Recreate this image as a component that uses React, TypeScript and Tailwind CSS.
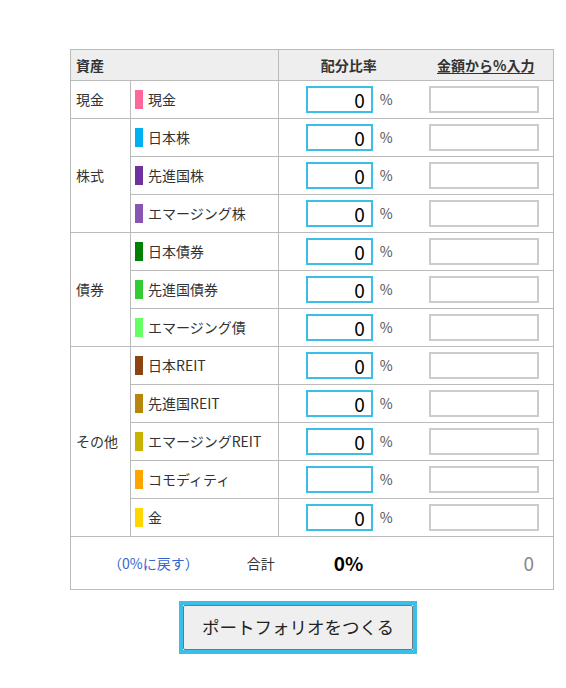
import { useState } from "react";

type Asset = { name: string; color: string; value: string };
type Group = { label: string; items: Asset[] };

const GROUPS: Group[] = [
  { label: "現金", items: [{ name: "現金", color: "#ff6699", value: "0" }] },
  {
    label: "株式",
    items: [
      { name: "日本株", color: "#00b0f0", value: "0" },
      { name: "先進国株", color: "#7030a0", value: "0" },
      { name: "エマージング株", color: "#8855b0", value: "0" },
    ],
  },
  {
    label: "債券",
    items: [
      { name: "日本債券", color: "#008000", value: "0" },
      { name: "先進国債券", color: "#33cc33", value: "0" },
      { name: "エマージング債", color: "#66ff66", value: "0" },
    ],
  },
  {
    label: "その他",
    items: [
      { name: "日本REIT", color: "#8b4513", value: "0" },
      { name: "先進国REIT", color: "#b8860b", value: "0" },
      { name: "エマージングREIT", color: "#c8b400", value: "0" },
      { name: "コモディティ", color: "#ffa500", value: "" },
      { name: "金", color: "#ffd700", value: "0" },
    ],
  },
];

const font = "font-['Noto_Sans_CJK_JP','Noto_Sans',sans-serif]";
const cell = "border border-[#bbbbbb] h-[38px] p-0";

function Row({ item, label, span }: { item: Asset; label?: string; span?: number }) {
  const [ratio, setRatio] = useState(item.value);
  const [amount, setAmount] = useState("");

  return (
    <tr>
      {label && (
        <td rowSpan={span} className={`${cell} pl-[5px] text-[14px] text-[#333]`}>
          {label}
        </td>
      )}
      <td className={`${cell} pl-[4px]`}>
        <div className="flex items-center gap-[5px] text-[14px] text-[#333]">
          <span className="inline-block h-[19px] w-[8px]" style={{ background: item.color }} />
          <span>{item.name}</span>
        </div>
      </td>
      <td className={`${cell} border-r-0`}>
        <div className="flex items-center justify-center gap-[7px] pl-[2px]">
          <input
            value={ratio}
            onChange={(e) => setRatio(e.target.value)}
            className="h-[27px] w-[67px] border-2 border-[#3bbfe8] bg-white pr-[6px] text-right text-[19px] leading-none text-black outline-none"
          />
          <span className="w-[14px] text-[14px] text-[#555]">%</span>
        </div>
      </td>
      <td className={`${cell} border-l-0`}>
        <div className="flex justify-center pr-[4px]">
          <input
            value={amount}
            onChange={(e) => setAmount(e.target.value)}
            className="h-[27px] w-[110px] border-2 border-[#cccccc] bg-white outline-none"
          />
        </div>
      </td>
    </tr>
  );
}

export default function App() {
  return (
    <div className={`${font} min-h-[688px] bg-white pt-[49px] pl-[70px]`}>
      <table className="w-[483px] table-fixed border-collapse">
        <colgroup>
          <col className="w-[60px]" />
          <col className="w-[148px]" />
          <col className="w-[140px]" />
          <col className="w-[135px]" />
        </colgroup>
        <thead>
          <tr className="bg-[#eeeeee] text-[14px] font-bold text-[#333]">
            <th colSpan={2} className="h-[31px] border border-[#bbbbbb] pl-[5px] text-left">
              資産
            </th>
            <th className="border border-r-0 border-[#bbbbbb] text-center">配分比率</th>
            <th className="border border-l-0 border-[#bbbbbb] text-center">
              <span className="underline underline-offset-2">金額から%入力</span>
            </th>
          </tr>
        </thead>
        <tbody>
          {GROUPS.map((g) =>
            g.items.map((item, i) => (
              <Row
                key={item.name}
                item={item}
                label={i === 0 ? g.label : undefined}
                span={g.items.length}
              />
            ))
          )}
          <tr>
            <td colSpan={2} className="h-[53px] border border-r-0 border-[#bbbbbb] p-0">
              <div className="flex items-center text-[14px]">
                <a href="#" className="ml-[37px] text-[#3366cc]">
                  （0%に戻す）
                </a>
                <span className="ml-[48px] text-[#333]">合計</span>
              </div>
            </td>
            <td className="border-y border-[#bbbbbb] p-0 text-center text-[19px] font-bold text-black">
              0%
            </td>
            <td className="border border-l-0 border-[#bbbbbb] p-0 pr-[19px] text-right text-[19px] text-[#888]">
              0
            </td>
          </tr>
        </tbody>
      </table>

      <div className="ml-[109px] mt-[11px] inline-block border-[4px] border-[#3bbfe8]">
        <button
          type="button"
          className="h-[45px] w-[230px] rounded-[2px] border border-[#767676] bg-[#efefef] text-[17.5px] text-[#222]"
        >
          ポートフォリオをつくる
        </button>
      </div>
    </div>
  );
}
